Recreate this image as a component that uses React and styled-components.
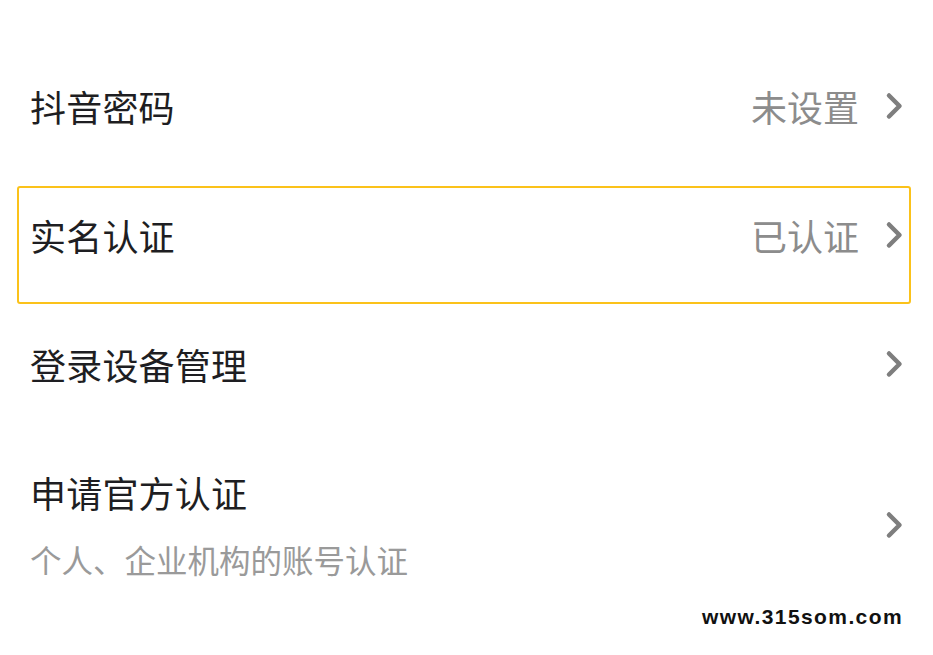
import React from 'react'
import styled, { createGlobalStyle } from 'styled-components'

const GlobalStyle = createGlobalStyle`
    html, body {
        margin: 0;
        padding: 0;
        background: #ffffff;
    }
    body {
        font-family: "Noto Sans CJK SC", "Noto Sans", sans-serif;
    }
`

const Page = styled.div`
    position: relative;
    width: 933px;
    height: 655px;
    padding-top: 41px;
    box-sizing: border-box;
    background: #ffffff;
    overflow: hidden;
`

const Row = styled.div`
    position: relative;
    display: flex;
    align-items: center;
    justify-content: space-between;
    height: ${(props) => props.tall ? 193 : 129}px;
    padding: 0 30px 0 30px;
    box-sizing: border-box;
`

const Highlight = styled.div`
    position: absolute;
    top: 16px;
    bottom: -5px;
    left: 17px;
    right: 22px;
    border: 2px solid #fbc21a;
    border-radius: 3px;
    pointer-events: none;
`

const TextBlock = styled.div`
    display: flex;
    flex-direction: column;
    gap: 25px;
`

const Title = styled.span`
    font-size: 36px;
    line-height: 44px;
    color: #1e1e22;
    letter-spacing: 0.2px;
`

const Subtitle = styled.span`
    font-size: 31.5px;
    line-height: 40px;
    color: #9a9a9a;
`

const Right = styled.div`
    display: flex;
    align-items: center;
    gap: 26px;
`

const Value = styled.span`
    font-size: 36px;
    line-height: 44px;
    color: #8c8c8c;
`

const Watermark = styled.div`
    position: absolute;
    right: 30px;
    bottom: 27px;
    font-family: "Liberation Sans", Arial, sans-serif;
    font-weight: bold;
    font-size: 21px;
    line-height: 22px;
    letter-spacing: 1.4px;
    color: #111;
`

const Chevron = () => (
    <svg width="18" height="28" viewBox="0 0 18 28">
        <path d="M4 3.5 L14.5 14 L4 24.5" fill="none" stroke="#7e7e7e" strokeWidth="4.5" strokeLinecap="round" strokeLinejoin="round" />
    </svg>
)

const items = [
    { title: '抖音密码', value: '未设置' },
    { title: '实名认证', value: '已认证', active: true },
    { title: '登录设备管理' },
    { title: '申请官方认证', sub: '个人、企业机构的账号认证' },
]

const App = () => {
    return (
        <Page>
            <GlobalStyle />
            {items.map((item) => (
                <Row key={item.title} tall={item.sub ? 1 : 0}>
                    {item.active && <Highlight />}
                    <TextBlock>
                        <Title>{item.title}</Title>
                        {item.sub && <Subtitle>{item.sub}</Subtitle>}
                    </TextBlock>
                    <Right>
                        {item.value && <Value>{item.value}</Value>}
                        <Chevron />
                    </Right>
                </Row>
            ))}
            <Watermark>www.315som.com</Watermark>
        </Page>
    )
}

export default App
